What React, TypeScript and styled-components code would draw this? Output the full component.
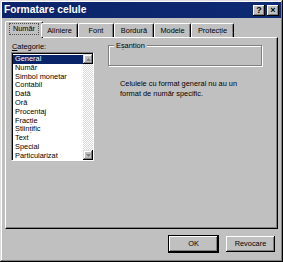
import React from 'react';
import styled, { createGlobalStyle } from 'styled-components';

const GlobalStyle = createGlobalStyle`
  html, body {
    margin: 0;
    padding: 0;
    background: #c0c0c0;
  }
`;

const face = '#c0c0c0';
const shadow = '#808080';
const dark = '#000000';
const light = '#dfdfdf';
const hilite = '#ffffff';
const navy = '#0a246a';

const Window = styled.div`
  width: 283px;
  height: 262px;
  box-sizing: border-box;
  padding: 2px;
  background: ${face};
  box-shadow: inset -1px -1px ${dark}, inset 1px 1px ${light},
    inset -2px -2px ${shadow}, inset 2px 2px ${hilite};
  display: flex;
  flex-direction: column;
  font-family: 'Liberation Sans', Arial, sans-serif;
  font-size: 7.4px;
  color: #000;
  overflow: hidden;
`;

const TitleBar = styled.div`
  height: 16px;
  display: flex;
  align-items: center;
  justify-content: space-between;
  padding: 0 2px 0 2px;
  background: linear-gradient(to right, ${navy}, #0e2a72);
`;

const TitleText = styled.span`
  color: #fff;
  font-weight: 700;
  font-size: 10.3px;
  line-height: 16px;
`;

const TitleButtons = styled.div`
  display: flex;
  gap: 2px;
`;

const CaptionButton = styled.div`
  width: 12px;
  height: 11px;
  box-sizing: border-box;
  background: ${face};
  box-shadow: inset -1px -1px ${dark}, inset 1px 1px ${hilite},
    inset -2px -2px ${shadow};
  display: flex;
  align-items: center;
  justify-content: center;
  font-weight: 700;
  font-size: 9px;
  line-height: 9px;
`;

const Body = styled.div`
  flex: 1;
  display: flex;
  flex-direction: column;
  padding: 3px 3px 0 3px;
`;

const TabStrip = styled.div`
  height: 16px;
  display: flex;
  align-items: flex-end;
  padding-left: 2px;
  position: relative;
  z-index: 1;
`;

const Tab = styled.div<{ $active?: boolean; $w: number }>`
  width: ${(p) => p.$w}px;
  height: ${(p) => (p.$active ? 17 : 14)}px;
  box-sizing: border-box;
  margin: ${(p) => (p.$active ? '0 -2px -1px -2px' : '0')};
  background: ${face};
  border-top: 1px solid ${hilite};
  border-left: 1px solid ${hilite};
  border-right: 1px solid ${dark};
  border-radius: 2px 2px 0 0;
  box-shadow: inset -1px 0 ${shadow};
  display: flex;
  align-items: center;
  justify-content: center;
  line-height: 10px;
  padding-bottom: ${(p) => (p.$active ? 2 : 0)}px;
`;

const FocusLabel = styled.span`
  padding: 0 3px;
  line-height: 10px;
  outline: 1px dotted #505050;
`;

const Panel = styled.div`
  height: 192px;
  box-sizing: border-box;
  background: ${face};
  border-top: 1px solid ${hilite};
  border-left: 1px solid ${hilite};
  border-right: 1px solid ${dark};
  border-bottom: 1px solid ${dark};
  box-shadow: inset -1px -1px ${shadow};
  display: grid;
  grid-template-columns: 83px 154px;
  column-gap: 14px;
  padding: 4px 0 0 5px;
`;

const LeftColumn = styled.div`
  display: flex;
  flex-direction: column;
`;

const FieldLabel = styled.div`
  line-height: 9px;
  height: 9px;
  margin-bottom: 1px;
  padding-left: 1px;

  u {
    text-decoration: underline;
  }
`;

const ListBox = styled.div`
  width: 83px;
  height: 109px;
  box-sizing: border-box;
  background: #fff;
  border-top: 1px solid ${shadow};
  border-left: 1px solid ${shadow};
  border-right: 1px solid ${hilite};
  border-bottom: 1px solid ${hilite};
  box-shadow: inset 1px 1px ${dark};
  display: flex;
  padding: 1px 0 0 1px;
  overflow: hidden;
`;

const Items = styled.div`
  flex: 1;
  display: flex;
  flex-direction: column;
  padding-top: 1px;
`;

const Item = styled.div<{ $selected?: boolean }>`
  height: 8.8px;
  line-height: 8.8px;
  padding-left: 2px;
  white-space: nowrap;
  background: ${(p) => (p.$selected ? navy : 'transparent')};
  color: ${(p) => (p.$selected ? '#fff' : '#000')};
`;

const ScrollBar = styled.div`
  width: 10px;
  display: flex;
  flex-direction: column;
  justify-content: space-between;
  background-color: #e8e8e8;
  background-image: repeating-conic-gradient(#ffffff 0% 25%, #d8d8d8 0% 50%);
  background-size: 2px 2px;
`;

const ScrollArrow = styled.div`
  width: 10px;
  height: 10px;
  box-sizing: border-box;
  background: ${face};
  box-shadow: inset -1px -1px ${dark}, inset 1px 1px ${light},
    inset -2px -2px ${shadow}, inset 2px 2px ${hilite};
  display: flex;
  align-items: center;
  justify-content: center;
`;

const RightColumn = styled.div`
  display: flex;
  flex-direction: column;
  padding-top: 3px;
`;

const GroupBox = styled.div`
  position: relative;
  height: 21px;
  box-sizing: border-box;
  border: 1px solid ${shadow};
  box-shadow: inset 1px 1px ${hilite}, 1px 1px ${hilite};
`;

const GroupLegend = styled.span`
  position: absolute;
  top: -5px;
  left: 5px;
  padding: 0 2px;
  background: ${face};
  line-height: 9px;
`;

const Description = styled.p`
  margin: 13px 0 0 12px;
  line-height: 10px;
  width: 130px;
`;

const ButtonRow = styled.div`
  display: flex;
  justify-content: flex-end;
  gap: 6px;
  margin-top: 6px;
  padding-right: 2px;
`;

const PushButton = styled.div<{ $default?: boolean }>`
  width: 51px;
  height: 18px;
  box-sizing: border-box;
  background: ${face};
  border: 1px solid ${(p) => (p.$default ? dark : 'transparent')};
  box-shadow: inset -1px -1px ${dark}, inset 1px 1px ${hilite},
    inset -2px -2px ${shadow};
  display: flex;
  align-items: center;
  justify-content: center;
  line-height: 10px;
`;

const Arrow = ({ up }: { up?: boolean }) => (
  <svg width="5" height="3" viewBox="0 0 5 3">
    <path d={up ? 'M2.5 0 L5 3 L0 3 Z' : 'M0 0 L5 0 L2.5 3 Z'} fill={shadow} />
  </svg>
);

const tabs = [
  { label: 'Număr', w: 38 },
  { label: 'Aliniere', w: 37 },
  { label: 'Font', w: 36 },
  { label: 'Bordură', w: 40 },
  { label: 'Modele', w: 37 },
  { label: 'Protecție', w: 43 },
];

const categories = [
  'General',
  'Număr',
  'Simbol monetar',
  'Contabil',
  'Dată',
  'Oră',
  'Procentaj',
  'Fracție',
  'Științific',
  'Text',
  'Special',
  'Particularizat',
];

export default function App() {
  return (
    <>
      <GlobalStyle />
      <Window>
        <TitleBar>
          <TitleText>Formatare celule</TitleText>
          <TitleButtons>
            <CaptionButton>?</CaptionButton>
            <CaptionButton>×</CaptionButton>
          </TitleButtons>
        </TitleBar>
        <Body>
          <TabStrip>
            {tabs.map((t, i) => (
              <Tab key={t.label} $w={t.w} $active={i === 0}>
                {i === 0 ? <FocusLabel>{t.label}</FocusLabel> : t.label}
              </Tab>
            ))}
          </TabStrip>
          <Panel>
            <LeftColumn>
              <FieldLabel>
                <u>C</u>ategorie:
              </FieldLabel>
              <ListBox>
                <Items>
                  {categories.map((c, i) => (
                    <Item key={c} $selected={i === 0}>
                      {c}
                    </Item>
                  ))}
                </Items>
                <ScrollBar>
                  <ScrollArrow>
                    <Arrow up />
                  </ScrollArrow>
                  <ScrollArrow>
                    <Arrow />
                  </ScrollArrow>
                </ScrollBar>
              </ListBox>
            </LeftColumn>
            <RightColumn>
              <GroupBox>
                <GroupLegend>Eșantion</GroupLegend>
              </GroupBox>
              <Description>
                Celulele cu format general nu au un format de număr specific.
              </Description>
            </RightColumn>
          </Panel>
          <ButtonRow>
            <PushButton $default>OK</PushButton>
            <PushButton>Revocare</PushButton>
          </ButtonRow>
        </Body>
      </Window>
    </>
  );
}
